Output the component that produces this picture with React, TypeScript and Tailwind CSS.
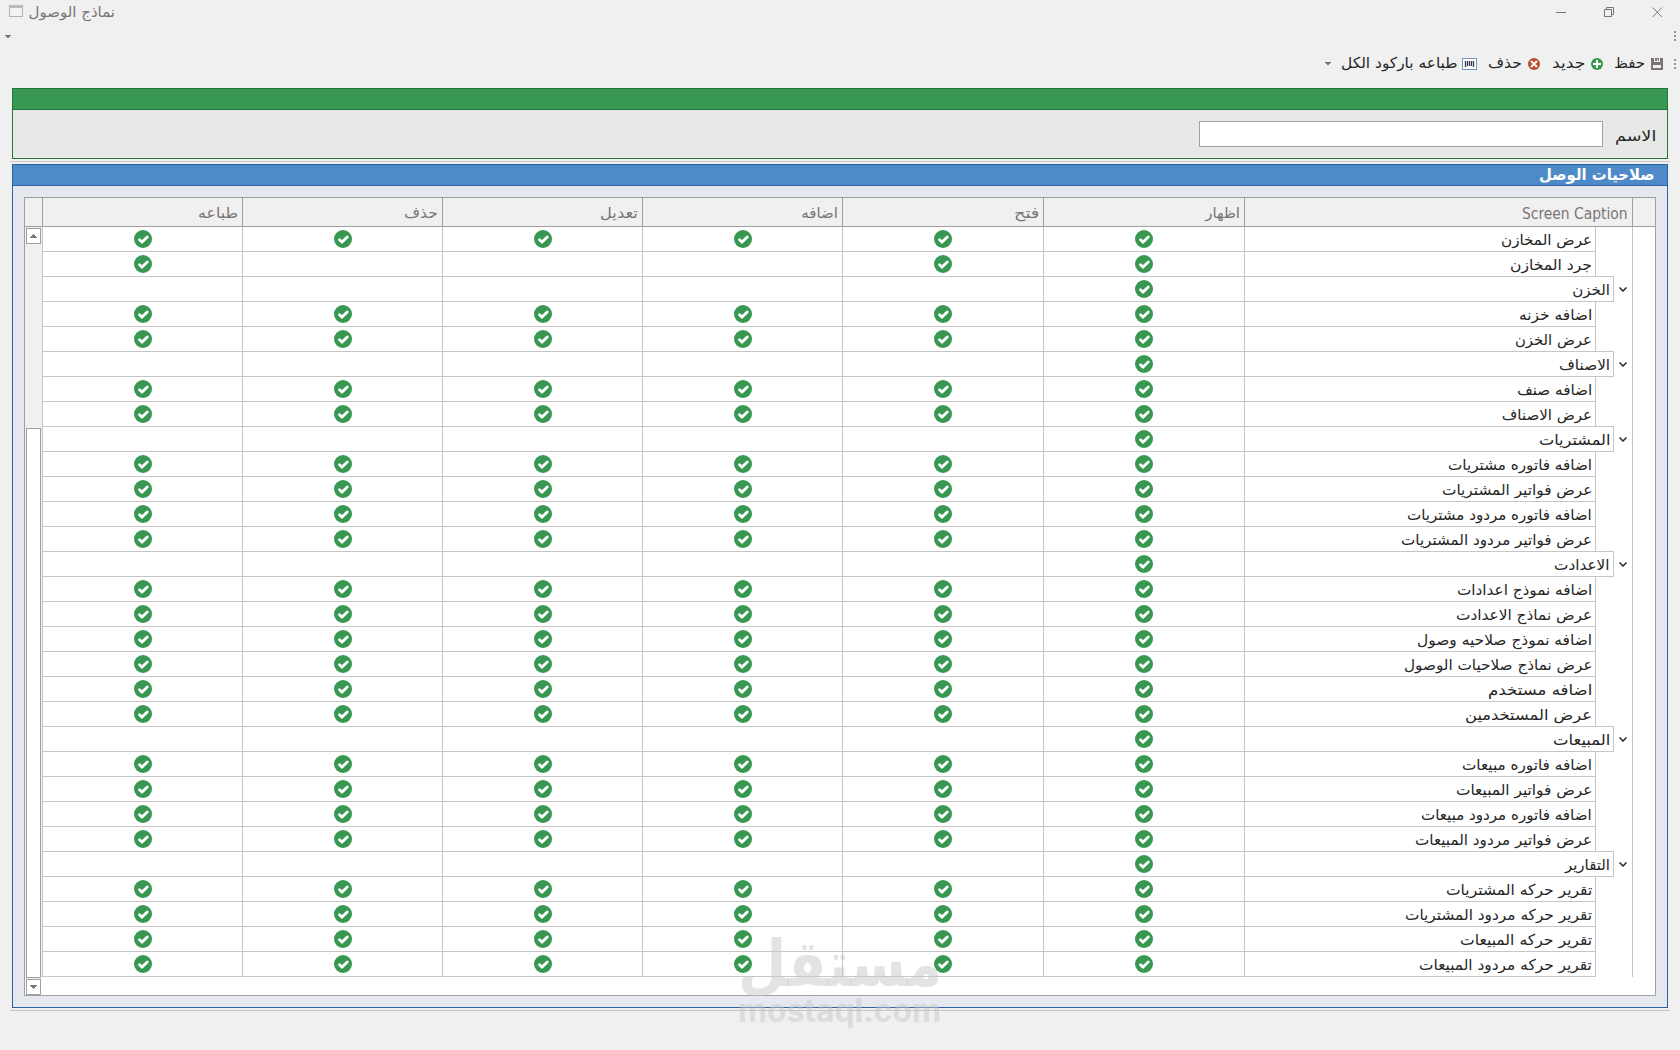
import { useLayoutEffect, useRef, useState } from 'react';

interface Row {
  caption: string;
  w: number;
  group?: boolean;
  flags?: string;
}

// one flag per column: show, open, add, edit, delete, print
const ALL = '111111';
const GROUP = '100000';

const columns = [
  { key: 'show', label: 'اظهار', w: 35, cls: 'w-[201px]' },
  { key: 'open', label: 'فتح', w: 25, cls: 'w-[201px]' },
  { key: 'add', label: 'اضافه', w: 37, cls: 'w-[200px]' },
  { key: 'edit', label: 'تعديل', w: 38, cls: 'w-[200px]' },
  { key: 'delete', label: 'حذف', w: 34, cls: 'w-[200px]' },
  { key: 'print', label: 'طباعه', w: 40, cls: 'w-[200px]' },
];

const rows: Row[] = [
  { caption: 'عرض المخازن', w: 91 },
  { caption: 'جرد المخازن', w: 82, flags: '110001' },
  { caption: 'الخزن', w: 38, group: true },
  { caption: 'اضافه خزنه', w: 73 },
  { caption: 'عرض الخزن', w: 77 },
  { caption: 'الاصناف', w: 51, group: true },
  { caption: 'اضافه صنف', w: 75 },
  { caption: 'عرض الاصناف', w: 90 },
  { caption: 'المشتريات', w: 71, group: true },
  { caption: 'اضافه فاتوره مشتريات', w: 144 },
  { caption: 'عرض فواتير المشتريات', w: 150 },
  { caption: 'اضافه فاتوره مردود مشتريات', w: 185 },
  { caption: 'عرض فواتير مردود المشتريات', w: 191 },
  { caption: 'الاعدادت', w: 56, group: true },
  { caption: 'اضافه نموذج اعدادات', w: 135 },
  { caption: 'عرض نماذج الاعدادت', w: 136 },
  { caption: 'اضافه نموذج صلاحيه وصول', w: 175 },
  { caption: 'عرض نماذج صلاحيات الوصول', w: 189 },
  { caption: 'اضافه مستخدم', w: 104 },
  { caption: 'عرض المستخدمين', w: 127 },
  { caption: 'المبيعات', w: 57, group: true },
  { caption: 'اضافه فاتوره مبيعات', w: 130 },
  { caption: 'عرض فواتير المبيعات', w: 136 },
  { caption: 'اضافه فاتوره مردود مبيعات', w: 171 },
  { caption: 'عرض فواتير مردود المبيعات', w: 177 },
  { caption: 'التقارير', w: 45, group: true },
  { caption: 'تقرير حركه المشتريات', w: 146 },
  { caption: 'تقرير حركه مردود المشتريات', w: 187 },
  { caption: 'تقرير حركه المبيعات', w: 132 },
  { caption: 'تقرير حركه مردود المبيعات', w: 173 },
];

// Text stretched to a fixed width, anchored on the right
function Fit({ w, children }: { w: number; children: string }) {
  const ref = useRef<HTMLSpanElement>(null);
  const [scale, setScale] = useState(1);

  useLayoutEffect(() => {
    if (ref.current) setScale(w / ref.current.offsetWidth);
  }, [w]);

  return (
    <span className="flex shrink-0" style={{ width: w }} dir="rtl">
      <span ref={ref} className="shrink-0 origin-right whitespace-nowrap" style={{ transform: `scaleX(${scale})` }}>
        {children}
      </span>
    </span>
  );
}

function CheckIcon() {
  return (
    <svg width="18" height="18" viewBox="0 0 18 18">
      <circle cx="9" cy="9" r="9" fill="#389851" />
      <path d="M5.500 9.700L8 12.100L13.300 7" fill="none" stroke="#fff" strokeWidth="2.800" strokeLinecap="round" />
    </svg>
  );
}

function Grip() {
  return (
    <svg className="shrink-0" width="2" height="10" viewBox="0 0 2 10" fill="#989395">
      <rect width="2" height="2" />
      <rect y="4" width="2" height="2" />
      <rect y="8" width="2" height="2" />
    </svg>
  );
}

function Caret({ up }: { up?: boolean }) {
  return (
    <svg width="7" height="4" viewBox="0 0 7 4" fill="#7b7476">
      {up ? <path d="M3 0h1v1h1v1h1v1h1v1H0V3h1V2h1V1h1z" /> : <path d="M0 0h7v1H6v1H5v1H4v1H3V3H2V2H1V1H0z" />}
    </svg>
  );
}

function SmallCaret() {
  return (
    <svg width="6" height="3" viewBox="0 0 6 3" fill="#7b7476">
      <path d="M0 0h6v1H5v1H4v1H2V2H1V1H0z" />
    </svg>
  );
}

function TitleBar() {
  return (
    <div className="flex h-[26px] items-start">
      <svg className="ml-[9px] mt-[5px]" width="14" height="12" viewBox="0 0 14 12">
        <rect x=".5" y=".5" width="13" height="11" fill="#f3f1f2" stroke="#b5b1b2" />
        <rect width="14" height="3" fill="#bdb9ba" />
      </svg>
      <div className="ml-[6px] leading-[24px] text-[#7b7476]">
        <Fit w={86}>نماذج الوصول</Fit>
      </div>
      <div className="flex-1" />
      <svg className="mt-[7px] mr-[17px]" width="108" height="11" viewBox="0 0 108 11" fill="none" stroke="#7b7476">
        <path d="M1 5.500h10M49.500 2.500h7v7h-7zM51.500 2.500v-2h7v7h-2" />
        <path d="M97.500 .5l9.500 9.500M107 .5l-9.500 9.500" />
      </svg>
    </div>
  );
}

function Toolbar() {
  return (
    <div dir="rtl" className="flex h-[34px] items-center pt-px pr-1 text-[#262626]">
      <Grip />
      <svg className="mr-[11px]" width="12" height="12" viewBox="0 0 12 12">
        <path d="M0 0h12v12H0z" fill="#7b7476" />
        <path d="M3 0h1v4H3zM8 0h1v4H8zM4 3h4v1H4zM6 1h1v2H6zM2 7h8v3H2z" fill="#f0f0f0" />
      </svg>
      <div className="mr-[6px]"><Fit w={31}>حفظ</Fit></div>
      <svg className="mr-[11px]" width="12" height="12" viewBox="0 0 12 12">
        <circle cx="6" cy="6" r="6" fill="#389851" />
        <path d="M6 2v8M2 6h8" stroke="#fff" strokeWidth="2" />
      </svg>
      <div className="mr-[6px]"><Fit w={33}>جديد</Fit></div>
      <svg className="mr-[12px]" width="12" height="12" viewBox="0 0 12 12">
        <circle cx="6" cy="6" r="6" fill="#b1512c" />
        <path d="M3 3l6 6M9 3l-6 6" stroke="#fbe9e6" strokeWidth="2.400" />
      </svg>
      <div className="mr-[6px]"><Fit w={34}>حذف</Fit></div>
      <svg className="mr-[11px]" width="15" height="12" viewBox="0 0 15 12">
        <rect x=".5" y=".5" width="14" height="11" fill="#fff" stroke="#6f96c8" />
        <path d="M3.500 3v6M5.500 3v5M7.500 3v5M9.500 3v5M11.500 3v6" stroke="#3a3550" strokeWidth="1.300" />
      </svg>
      <div className="mr-[4px]"><Fit w={117}>طباعه باركود الكل</Fit></div>
      <div className="mr-[10px]"><SmallCaret /></div>
    </div>
  );
}

function NamePanel() {
  const [name, setName] = useState('');
  return (
    <section className="mx-3 h-[71px] border border-[#217640] bg-[#e6e9e6]">
      <div className="h-[21px] border-b border-[#217640] bg-[#389851]" />
      <div className="flex pt-[11px] pr-[11px]">
        <label className="leading-[30px] text-[#262626]">
          <Fit w={41}>الاسم</Fit>
        </label>
        <input
          value={name}
          onChange={(e) => setName(e.target.value)}
          className="mr-3 h-[26px] w-[404px] border border-[#a0a0a0] bg-white px-2 outline-none"
        />
      </div>
    </section>
  );
}

function ScrollBar() {
  return (
    <div className="flex h-[768px] w-[17px] shrink-0 flex-col bg-white">
      <div className="flex h-[752px] flex-col bg-[#f0f0f0] px-px pt-px">
        <div className="flex h-4 shrink-0 items-center justify-center border border-[#a0a0a0] bg-white"><Caret up /></div>
        <div className="mt-[184px] h-[550px] shrink-0 border border-[#a0a0a0] bg-white" />
      </div>
      <div className="mx-px flex h-4 shrink-0 items-center justify-center border border-[#a0a0a0] bg-white"><Caret /></div>
    </div>
  );
}

function GridRow({ row, beforeGroup }: { row: Row; beforeGroup: boolean }) {
  const flags = row.group ? GROUP : row.flags ?? ALL;
  return (
    <div className="flex h-[25px]">
      <div className="w-[22px] shrink-0" />
      <div className="flex w-[388px] shrink-0 border-r border-[#c6c6c6]">
        <div className="flex w-[18px] shrink-0 items-center justify-center">
          {row.group && (
            <svg width="8" height="5" viewBox="0 0 8 5" fill="none" stroke="#262626" strokeWidth="1.500">
              <path d="M.5 .5L4 4L7.500 .5" />
            </svg>
          )}
        </div>
        {!row.group && (
          <div className={beforeGroup ? 'w-[18px] shrink-0 border-b border-[#c6c6c6]' : 'w-[18px] shrink-0'} />
        )}
        <div className="flex-1 border-r border-b border-[#c6c6c6] pr-[3px] leading-[26px] text-[#262626]">
          <Fit w={row.w}>{row.caption}</Fit>
        </div>
      </div>
      {columns.map((c, i) => (
        <div key={c.key} className={`${c.cls} flex shrink-0 items-center justify-center border-r border-b border-[#c6c6c6]`}>
          {flags[i] === '1' && <CheckIcon />}
        </div>
      ))}
      <div className="w-px shrink-0 bg-[#c6c6c6]" />
    </div>
  );
}

function PermissionsGrid() {
  return (
    <div className="h-[799px] w-[1632px] border border-[#a0a0a0] bg-white">
      <div className="flex h-[29px] border-b border-[#a0a0a0] bg-[#f0f0f0] leading-[30px] text-[#7b7476]">
        <div className="w-[22px] shrink-0" />
        <div className="w-[388px] shrink-0 border-r border-[#a0a0a0] pr-1 font-['DejaVu_Sans_Condensed','DejaVu_Sans',sans-serif] text-[16px] leading-[31px]">
          <Fit w={106}>Screen Caption</Fit>
        </div>
        {columns.map((c) => (
          <div key={c.key} className={`${c.cls} shrink-0 border-r border-[#a0a0a0] pr-1`}>
            <Fit w={c.w}>{c.label}</Fit>
          </div>
        ))}
        <div className="w-px shrink-0 bg-[#a0a0a0]" />
      </div>
      <div className="flex">
        <div className="w-[1613px] shrink-0">
          {rows.map((row, i) => (
            <GridRow key={row.caption} row={row} beforeGroup={!!rows[i + 1]?.group} />
          ))}
        </div>
        <ScrollBar />
      </div>
    </div>
  );
}

function Watermark() {
  return (
    <svg className="pointer-events-none absolute top-[900px] left-[730px] overflow-visible" width="220" height="140" fill="#c8c8c8" fillOpacity=".5">
      <text x="110" y="86" textAnchor="middle" textLength="204" lengthAdjust="spacingAndGlyphs" fontSize="64" fontWeight="bold" fontFamily="DejaVu Sans, sans-serif">مستقل</text>
      <text x="8" y="122" textLength="203" lengthAdjust="spacingAndGlyphs" fontSize="32" fontWeight="bold" fontFamily="Inter, sans-serif" direction="ltr">mostaql.com</text>
    </svg>
  );
}

export default function App() {
  return (
    <div className="relative h-[1050px] w-[1680px] overflow-hidden bg-[#f0f0f0] font-['DejaVu_Sans',sans-serif] text-[15px]">
      <TitleBar />
      <div className="flex h-5 items-center justify-between pr-1 pl-[5px]">
        <SmallCaret />
        <Grip />
      </div>
      <Toolbar />
      <div dir="rtl" className="pt-2">
        <NamePanel />
        <div className="mx-[10px] mt-[2px] h-px bg-[#c6c6c6]" />
        <section className="mx-3 mt-[2px] h-[844px] border border-[#2b63a0] bg-[#e5e8ee]">
          <h2 className="h-[21px] border-b border-[#2b63a0] bg-[#4e8ac8] pr-3 text-base leading-[20px] font-bold text-white">
            <Fit w={116}>صلاحيات الوصل</Fit>
          </h2>
          <div className="pt-[11px] pr-[11px]">
            <PermissionsGrid />
          </div>
        </section>
        <div className="mx-[10px] mt-[2px] h-px bg-[#c6c6c6]" />
      </div>
      <Watermark />
    </div>
  );
}
